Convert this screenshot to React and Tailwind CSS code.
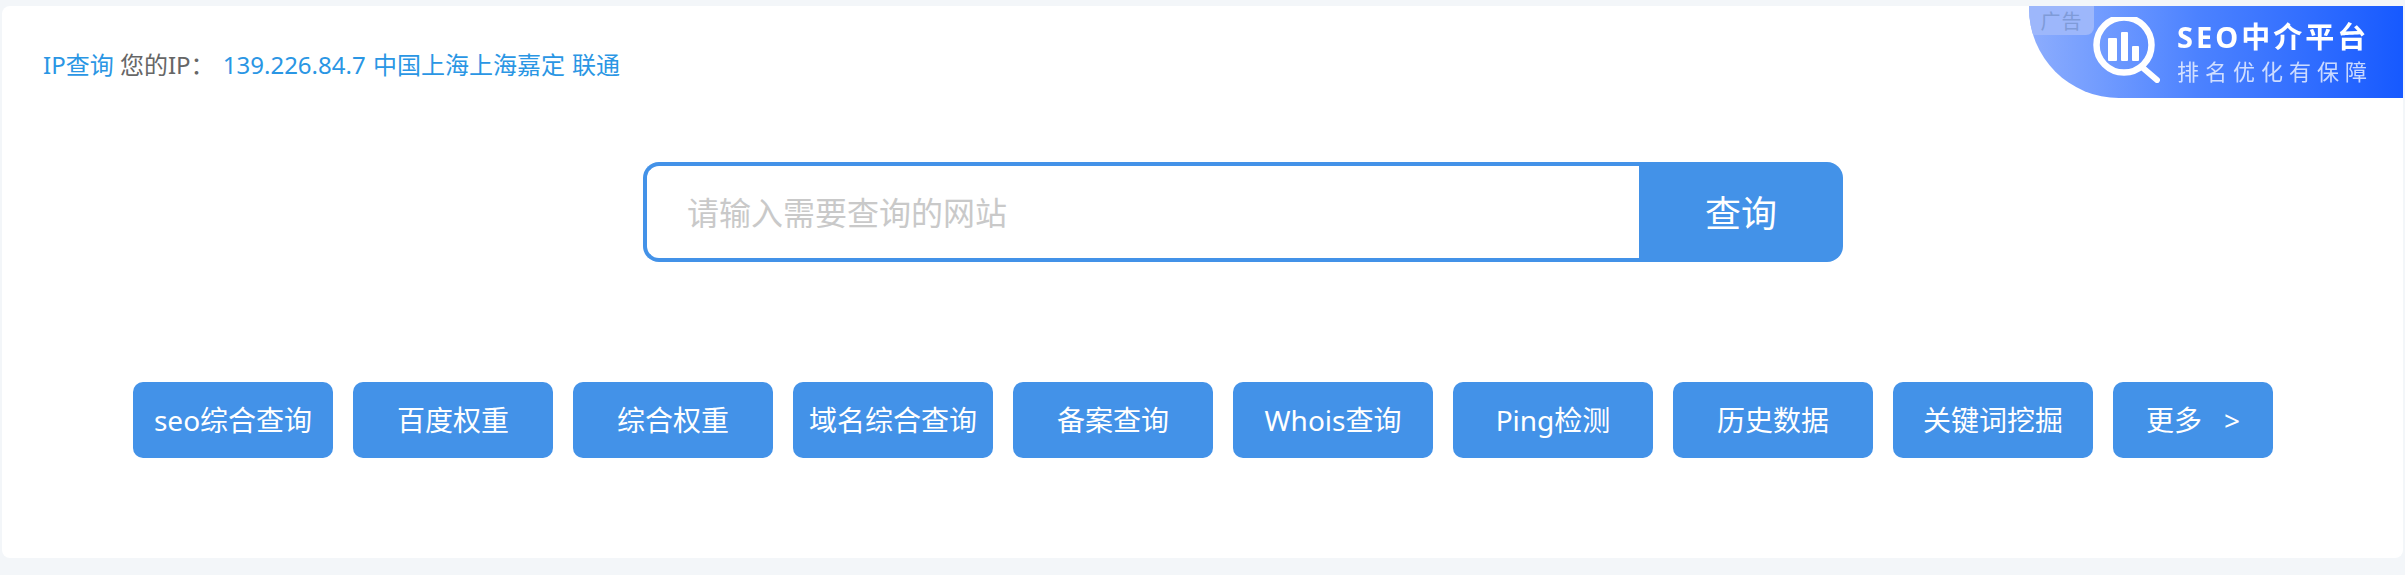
import React from 'react';

const tools = ['seo综合查询', '百度权重', '综合权重', '域名综合查询', '备案查询', 'Whois查询', 'Ping检测', '历史数据', '关键词挖掘'];

const AdBanner = () => (
  <div className="absolute top-0 right-0 flex h-[92px] w-[374px] items-center overflow-hidden rounded-bl-[90px] bg-gradient-to-r from-[#8dadfd] via-[#4c82ff] via-45% to-[#1659ff]">
    <span className="absolute top-0 left-0 flex h-[29px] w-[65px] items-center justify-center rounded-br-[8px] bg-[#9db7fb] pt-[3px] text-[20px] leading-none tracking-[1px] text-[#7f9bd8]">广告</span>
    <svg className="absolute top-[11px] left-[58px] blur-[0.4px]" width="76" height="76" viewBox="0 0 76 76" fill="none">
      <circle cx="37" cy="28" r="27.5" stroke="#fff" strokeWidth="6.5" />
      <rect x="21" y="21" width="9" height="23" rx="1" fill="#fff" />
      <rect x="34" y="15" width="7" height="29" rx="1" fill="#fff" />
      <rect x="45" y="29" width="7" height="15" rx="1" fill="#fff" />
      <path d="M56 51 L70 63" stroke="#fff" strokeWidth="6" strokeLinecap="round" />
    </svg>
    <div className="mt-[4px] ml-[148px] flex flex-col text-white blur-[0.4px]">
      <span className="text-[29px] leading-[34px] font-bold tracking-[3px] whitespace-nowrap">SEO中介平台</span>
      <span className="text-[22px] leading-[34px] tracking-[6px] whitespace-nowrap text-white/75">排名优化有保障</span>
    </div>
  </div>
);

export default function App() {
  return (
    <div className="h-[575px] overflow-hidden bg-[#f3f6f9] px-[2px] pt-[6px] font-['Noto_Sans','Noto_Sans_CJK_SC',sans-serif]">
      <div className="relative h-[552px] rounded-[8px] bg-white pt-[35px]">
        <AdBanner />

        <div className="ml-[41px] flex h-[48px] items-center text-[24px] whitespace-pre text-[#666]">
          <a className="text-[#2a96e4]">IP查询</a>
          <span> 您的IP： </span>
          <a className="ml-[2px] text-[#2a96e4] [word-spacing:1px]">139.226.84.7 中国上海上海嘉定 联通</a>
        </div>

        <div className="mt-[73px] ml-[641px] flex h-[100px] w-[1200px]">
          <input
            className="min-w-0 flex-1 rounded-l-[16px] border-4 border-r-0 border-[#4392e8] bg-white pt-[2px] pl-[40px] text-[32px] outline-none placeholder:text-[#c9c9c9]"
            placeholder="请输入需要查询的网站"
          />
          <button className="w-[204px] rounded-r-[16px] bg-[#4392e8] pt-[4px] text-[36px] text-white">查询</button>
        </div>

        <div className="mt-[120px] ml-[131px] flex gap-[20px]">
          {tools.map((name) => (
            <a key={name} className="flex h-[76px] w-[200px] items-center justify-center rounded-[10px] bg-[#4392e8] text-[28px] whitespace-nowrap text-white">
              {name}
            </a>
          ))}
          <a className="flex h-[76px] w-[160px] items-center justify-center rounded-[10px] bg-[#4392e8] text-[28px] whitespace-pre text-white">更多   &gt;</a>
        </div>
      </div>
    </div>
  );
}
